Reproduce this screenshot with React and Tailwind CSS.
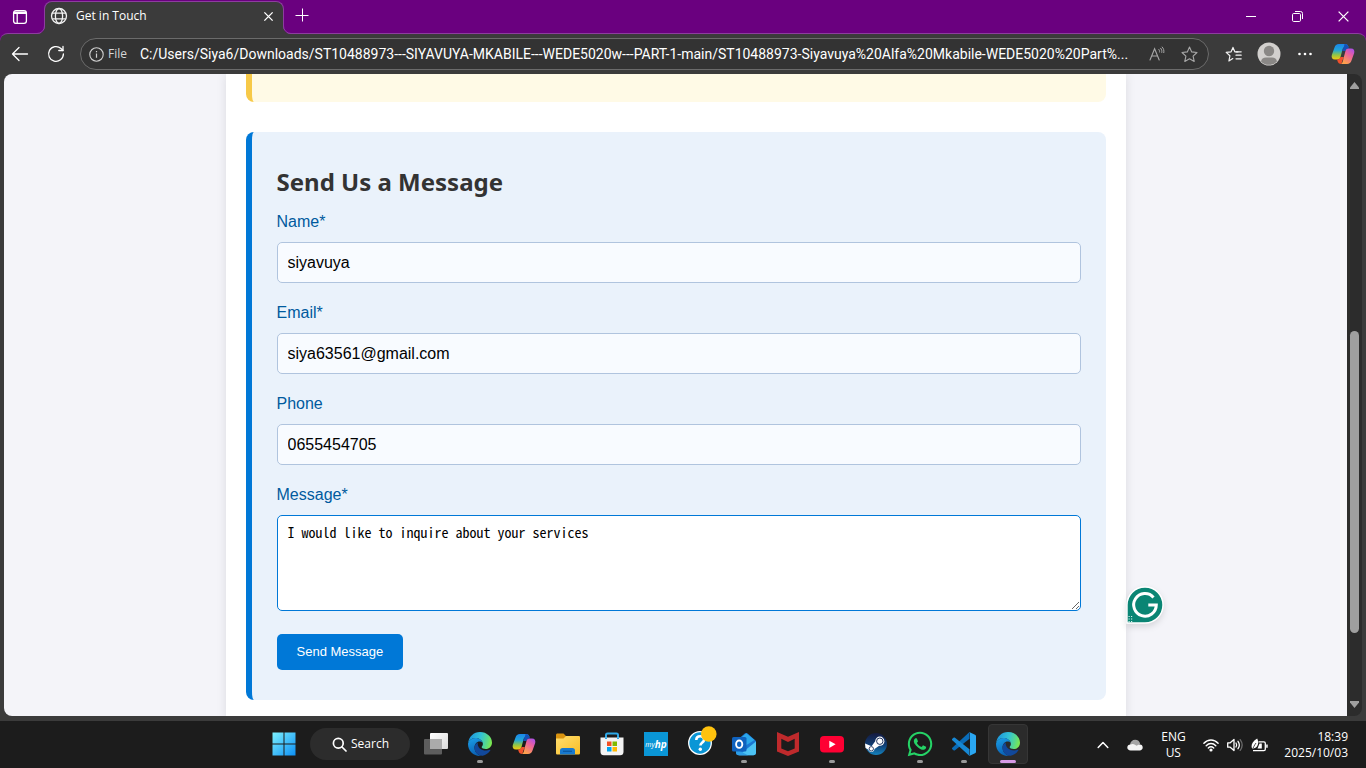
import { useState } from 'react';
import { FaWhatsapp } from 'react-icons/fa';

const UI = "font-['Open_Sans','Noto_Sans',sans-serif]";

/* ---------- browser chrome icons ---------- */

function WorkspaceIcon() {
  return (
    <svg width="16" height="16" viewBox="0 0 16 16" fill="none" stroke="#fff" strokeWidth="1.3">
      <rect x="1.600" y="1.600" width="12.800" height="12.800" rx="2.400" />
      <path d="M2 3.200h12M2 4.200h12" strokeWidth="1.600" />
      <path d="M5.200 4.500v9.600" />
    </svg>
  );
}

function GlobeIcon() {
  return (
    <svg width="18" height="18" viewBox="0 0 18 18" fill="none" stroke="#f2f2f2" strokeWidth="1.300">
      <circle cx="9" cy="9" r="7.500" />
      <ellipse cx="9" cy="9" rx="3.600" ry="7.500" />
      <path d="M2.200 6.200h13.600M2.200 11.800h13.600" />
    </svg>
  );
}

function CrossIcon({ size, stroke }) {
  return (
    <svg width={size} height={size} viewBox="0 0 12 12" stroke="#fff" strokeWidth={stroke} fill="none">
      <path d="M1.500 1.500l9 9M10.500 1.500l-9 9" />
    </svg>
  );
}

function PlusIcon() {
  return (
    <svg width="14" height="14" viewBox="0 0 14 14" stroke="#fff" strokeWidth="1" fill="none">
      <path d="M7.500 .5v13M.5 7.500h13" />
    </svg>
  );
}

function BackIcon() {
  return (
    <svg width="18" height="16" viewBox="0 0 18 16" stroke="#fff" strokeWidth="1.300" fill="none" strokeLinecap="round" strokeLinejoin="round">
      <path d="M8 1.500L1.500 8L8 14.500M1.500 8h15" />
    </svg>
  );
}

function ReloadIcon() {
  return (
    <svg width="18" height="18" viewBox="0 0 18 18" stroke="#fff" strokeWidth="1.300" fill="none" strokeLinecap="round" strokeLinejoin="round">
      <path d="M16.400 9a7.400 7.400 0 1 1-2.400-5.500L16 5.500" />
      <path d="M16 1.400v4.100h-4.200" />
    </svg>
  );
}

function InfoIcon() {
  return (
    <svg width="15" height="15" viewBox="0 0 15 15" stroke="#d0d0d0" fill="none">
      <circle cx="7.500" cy="7.500" r="6.700" strokeWidth="1.100" />
      <path d="M7.500 6.600v4.200M7.500 4v1.300" strokeWidth="1.200" />
    </svg>
  );
}

function ReadAloudIcon() {
  return (
    <svg width="16" height="16" viewBox="0 0 16 16" stroke="#a8a8a8" fill="none" strokeWidth="1.100" strokeLinecap="round">
      <path d="M1 14L5.600 2.800L10.200 14M2.700 10h5.800" />
      <path d="M9.800 3.400c.7.800.9 1.600.8 2.600M11.600 2.200c1.200 1.300 1.500 2.700 1.200 4.200M13.200 1c1.500 1.600 2 3.500 1.600 5.600" strokeWidth="1" />
    </svg>
  );
}

function StarIcon() {
  return (
    <svg width="17" height="17" viewBox="0 0 17 17" stroke="#a8a8a8" fill="none" strokeWidth="1.100" strokeLinejoin="round">
      <path d="M8.500 1l2.200 4.900 5.300.6-3.900 3.600 1.100 5.300-4.700-2.700-4.700 2.700 1.100-5.300L1 6.500l5.300-.6z" />
    </svg>
  );
}

function FavoritesIcon() {
  return (
    <svg width="18" height="17" viewBox="0 0 18 17" stroke="#f2f2f2" fill="none" strokeWidth="1.200" strokeLinejoin="round" strokeLinecap="round">
      <path d="M13 5.800H9.800L8 1.400 6.100 5.800 1.200 6.400l3.700 3.400-1 5.200L7.800 12.600" />
      <path d="M11.200 5.800h5M11 9.200h5.200M11 12.800h5.200" />
    </svg>
  );
}

function AvatarIcon() {
  return (
    <svg width="24" height="24" viewBox="0 0 24 24">
      <circle cx="12" cy="12" r="11.500" fill="#d2d0ce" />
      <circle cx="12" cy="9" r="5.200" fill="#8a8886" />
      <path d="M4 19.400c.4-2.900 2.300-4 5-4h6c2.700 0 4.600 1.100 5 4a11 11 0 0 1-16 0z" fill="#8a8886" />
    </svg>
  );
}

function CopilotIcon({ id }) {
  return (
    <svg width="24" height="24" viewBox="0 0 24 24">
      <defs>
        <linearGradient id={id + 'a'} x1="0" y1="0" x2="0" y2="1">
          <stop offset="0" stopColor="#1a86ea" />
          <stop offset=".4" stopColor="#22a6d8" />
          <stop offset=".7" stopColor="#8fc548" />
          <stop offset="1" stopColor="#f7c80e" />
        </linearGradient>
        <linearGradient id={id + 'b'} x1="1" y1="0" x2=".4" y2="1">
          <stop offset="0" stopColor="#a04df5" />
          <stop offset=".45" stopColor="#ea609f" />
          <stop offset="1" stopColor="#ffa04c" />
        </linearGradient>
      </defs>
      <path d="M8 2h6c2 0 3 1 3.500 3H14c-1.500 0-2 1-2.400 2.200L9.500 15c-.5 1.700-1.300 2.500-3 2.500H4c-2.800 0-3.800-2-3.200-4.500L3.500 5.500C4.200 3.200 5.500 2 8 2z" fill={'url(#' + id + 'a)'} />
      <path d="M13.500 2c2.300 0 3.500 1 4 3l.5 1.500h-.5c-1.700 0-2.500.8-3 2.500h-3.300l.6-1.800c.8-1.800 1.400-3.200 1.700-5.200z" fill="#1450b8" />
      <path d="M10.500 22c-2.300 0-3.500-1-4-3l-.4-1.500h.4c1.700 0 2.500-.8 3-2.500h3.300l-.6 1.800c-.8 1.800-1.400 3.200-1.700 5.200z" fill="#f2502c" />
      <path d="M16 22h-6c1.500-.4 2-3 2.400-5.200L14.500 9c.5-1.700 1.300-2.500 3-2.500H20c2.800 0 3.800 2 3.200 4.500L20.500 18.500c-.7 2.300-2 3.500-4.500 3.500z" fill={'url(#' + id + 'b)'} />
    </svg>
  );
}

/* ---------- taskbar icons ---------- */

function WindowsIcon() {
  return (
    <svg width="24" height="24" viewBox="0 0 24 24">
      <defs>
        <linearGradient id="win" x1="0" y1="0" x2="24" y2="24" gradientUnits="userSpaceOnUse">
          <stop offset="0" stopColor="#7ff3ff" />
          <stop offset="1" stopColor="#0a8df5" />
        </linearGradient>
      </defs>
      <path d="M.5.5h11v11H.5zM12.500.5h11v11h-11zM.5 12.500h11v11H.5zM12.500 12.500h11v11h-11z" fill="url(#win)" />
    </svg>
  );
}

function TaskViewIcon() {
  return (
    <svg width="24" height="24" viewBox="0 0 24 24">
      <defs>
        <linearGradient id="tvA" x1="0" y1="0" x2="1" y2="1">
          <stop offset="0" stopColor="#fff" />
          <stop offset="1" stopColor="#d9d9d9" />
        </linearGradient>
      </defs>
      <rect x="6" y="1" width="18" height="16" rx="1" fill="url(#tvA)" />
      <rect x="0" y="7" width="18" height="15.500" rx="1" fill="#5d5d5d" />
      <rect x="6" y="7" width="12" height="10" fill="#ababab" />
    </svg>
  );
}

function EdgeIcon({ id }) {
  return (
    <svg width="24" height="24" viewBox="0 0 24 24">
      <defs>
        <linearGradient id={id + 'g'} x1="0" y1=".3" x2="1" y2=".5">
          <stop offset="0" stopColor="#1b93dd" />
          <stop offset=".5" stopColor="#32c2d5" />
          <stop offset=".8" stopColor="#57d98b" />
          <stop offset="1" stopColor="#7ce84f" />
        </linearGradient>
        <linearGradient id={id + 'b'} x1="0" y1="0" x2=".3" y2="1">
          <stop offset="0" stopColor="#1ba0e8" />
          <stop offset="1" stopColor="#0a62b4" />
        </linearGradient>
      </defs>
      <path d="M.1 11.200C.700 4.800 5.700 0 12 0c7 0 12 5 12 10.700 0 3.700-2.800 6.300-6.300 6.300-2.300 0-4.100-.8-4.100-2 0-.6 1.300-1.200 1.300-3.100C14.900 9.200 11.800 6 7.600 6 4 6 1.200 8 .1 11.200z" fill={'url(#' + id + 'g)'} />
      <path d="M.1 11.200C1.200 8 4 6 7.600 6c3.600 0 6.300 2.300 7.100 4.700-.8-.9-1.800-1.300-3-1.300-3 0-5.200 2.700-5.200 6 0 4 2.800 7.300 6.700 8.500-.4.100-.8.100-1.200.100C5.200 24 0 18.600 0 12c0-.3 0-.5.1-.8z" fill={'url(#' + id + 'b)'} />
      <path d="M9.800 10.400c-2 1-3.300 2.800-3.300 5.300 0 4.300 3.400 8.300 8.200 8 3.200-.7 6-2.600 7.700-5.400.3-.5-.1-.8-.6-.6-1.200.6-2.500.8-3.700.8-5 0-9.100-3.200-8.300-8.100z" fill="#11489b" />
    </svg>
  );
}

function FolderIcon() {
  return (
    <svg width="24" height="24" viewBox="0 0 24 24">
      <defs>
        <linearGradient id="fld" x1="0" y1="0" x2="1" y2="1">
          <stop offset="0" stopColor="#ffdf70" />
          <stop offset="1" stopColor="#f9bd25" />
        </linearGradient>
      </defs>
      <path d="M0 3c0-.9.600-1.500 1.500-1.500h6L10 4h12.500c.9 0 1.500.6 1.500 1.500V9H0z" fill="#d9930f" />
      <path d="M0 6.500h7.500L10 4h12.500c.9 0 1.500.6 1.500 1.500V21c0 1-.6 1.500-1.500 1.500h-21C.6 22.500 0 22 0 21z" fill="url(#fld)" />
      <path d="M4 22.500v-4c0-1.600 1-2.500 2.500-2.500h10c1.500 0 2.500.9 2.500 2.500v4z" fill="#1779cf" />
      <path d="M7 19.300h9" stroke="#0b59a3" strokeWidth="1.300" />
    </svg>
  );
}

function StoreIcon() {
  return (
    <svg width="24" height="24" viewBox="0 0 24 24">
      <path d="M6 7V3c0-1 .6-1.500 1.500-1.500h9c.9 0 1.500.5 1.500 1.500v4" fill="none" stroke="#2fa9e8" strokeWidth="2" />
      <path d="M.5 5.500h23V20c0 2-1.200 3.300-3.300 3.300H3.800C1.700 23.300.5 22 .5 20z" fill="#f3f3f3" />
      <path d="M6 7V5.500M18 7V5.500" stroke="#2fa9e8" strokeWidth="2" />
      <path d="M7 9.500h4.500V14H7z" fill="#f25022" />
      <path d="M12.500 9.500H17V14h-4.500z" fill="#7fba00" />
      <path d="M7 15h4.500v4.500H7z" fill="#00a4ef" />
      <path d="M12.500 15H17v4.500h-4.500z" fill="#ffb900" />
    </svg>
  );
}

function MyHpIcon() {
  return (
    <span className="flex size-6 items-center justify-center bg-[#0a96d6] font-['Open_Sans',sans-serif] leading-none text-white italic">
      <span className="text-[7px] font-medium">my</span>
      <span className="text-[10px] font-bold">hp</span>
    </span>
  );
}

function HelpIcon() {
  return (
    <svg width="30" height="30" viewBox="0 0 30 30">
      <circle cx="13" cy="17" r="11.300" fill="#0a96d6" stroke="#fff" strokeWidth="1.300" />
      <path d="M9.300 14c0-2.400 1.600-3.800 3.900-3.800 2.400 0 3.900 1.300 3.900 3.300 0 2.900-3.500 3-3.700 6" fill="none" stroke="#fff" strokeWidth="2.600" />
      <circle cx="13.300" cy="23.200" r="1.700" fill="#fff" />
      <circle cx="21.800" cy="8" r="7.800" fill="#ffc20e" />
    </svg>
  );
}

function OutlookIcon() {
  return (
    <svg width="24" height="24" viewBox="0 0 24 24">
      <path d="M4 9L12.800 1.600c.9-.7 1.900-.7 2.800 0L24 9v11.500c0 1.700-1 2.700-2.700 2.700H6.700C5 23.200 4 22.200 4 20.500z" fill="#1a77d3" />
      <path d="M6 8.500l8.200-7.300L22.500 8 13 14z" fill="#2ba7ea" />
      <path d="M24 9.500v11c0 1.700-1 2.700-2.700 2.700H7L24 9.500z" fill="#4cc3f4" />
      <path d="M4 17l12 6.200H6.700C5 23.200 4 22.200 4 20.500z" fill="#2e9fe6" />
      <rect x="0" y="5" width="14.500" height="14.500" rx="1.600" fill="#0f62be" />
      <ellipse cx="7.200" cy="12.200" rx="3.100" ry="3.700" fill="none" stroke="#fff" strokeWidth="1.900" />
    </svg>
  );
}

function ShieldIcon() {
  return (
    <svg width="24" height="24" viewBox="0 0 24 24">
      <path d="M1 0l11 4.800L23 0v19.500L12 24 1 19.500z" fill="#bf2a2c" />
      <path d="M5.300 6.800L12 10l6.700-3.200v9.700L12 19.300l-6.700-2.800z" fill="#1c1c1c" />
    </svg>
  );
}

function YoutubeIcon() {
  return (
    <svg width="24" height="18" viewBox="0 0 24 18">
      <rect x="0" y="1" width="24" height="16.500" rx="4" fill="#ff0033" />
      <path d="M9.300 5.700v7.200l6.300-3.600z" fill="#fff" />
    </svg>
  );
}

function SteamIcon() {
  return (
    <svg width="24" height="24" viewBox="0 0 24 24">
      <defs>
        <linearGradient id="stm" x1="0" y1="0" x2="0" y2="1">
          <stop offset="0" stopColor="#151a3f" />
          <stop offset=".55" stopColor="#0f3d74" />
          <stop offset="1" stopColor="#1583bd" />
        </linearGradient>
      </defs>
      <circle cx="12" cy="12" r="11" fill="url(#stm)" />
      <path d="M1 11.500l6.600 2.800 3.600-5 4.300 4.300-5 3.500c-.2 1.900-1.500 3-3.200 3-1.600 0-2.700-.9-3.100-2.500L1.500 16z" fill="#fff" />
      <circle cx="15.800" cy="9.200" r="4.600" fill="#fff" />
      <circle cx="15.800" cy="9.200" r="3.200" fill="none" stroke="#20325e" strokeWidth="1" />
      <circle cx="7.300" cy="16.800" r="2.200" fill="none" stroke="#20325e" strokeWidth=".9" />
    </svg>
  );
}

function VsCodeIcon() {
  return (
    <svg width="24" height="24" viewBox="0 0 24 24">
      <path d="M17.500 0v6.700L3 18.300c-.5.4-1 .4-1.500 0L.3 17.200c-.5-.5-.5-1 0-1.500z" fill="#0a6cb8" />
      <path d="M17.500 24v-6.700L3 5.700c-.5-.4-1-.4-1.500 0L.3 6.800c-.5.5-.5 1 0 1.500z" fill="#1788d4" />
      <path d="M17.200.1L23 2.800c.6.300 1 .8 1 1.500v15.400c0 .7-.4 1.200-1 1.500l-5.800 2.700c.5-.4.800-.9.800-1.600V1.700c0-.7-.3-1.200-.8-1.600z" fill="#2aa7f2" />
    </svg>
  );
}

function CloudIcon() {
  return (
    <svg width="16" height="12" viewBox="0 0 16 12">
      <path d="M3 6C3.200 2.700 5.300.7 8.200.7c2.500 0 4.500 1.600 5 4.200L9 8z" fill="#a6a6a6" />
      <path d="M3.600 11.400C1.600 11.400.3 10.200.3 8.500c0-1.800 1.300-3 3.200-3 1.500-.9 3.200-.8 4.500.2l1.500 1c3.500-2.300 6.200-1.300 6.200 1.800 0 1.800-1.300 2.900-3 2.900z" fill="#f5f5f5" />
    </svg>
  );
}

function WifiIcon() {
  return (
    <svg width="16" height="14" viewBox="0 0 16 14" fill="none" stroke="#fff" strokeWidth="1.400" strokeLinecap="round">
      <path d="M.9 5.300c4-4.400 10.200-4.400 14.200 0M3.200 7.700c2.800-3 6.800-3 9.600 0M5.300 10c1.600-1.600 3.800-1.600 5.400 0" />
      <circle cx="8" cy="12" r=".9" fill="#fff" />
    </svg>
  );
}

function SpeakerIcon() {
  return (
    <svg width="16" height="14" viewBox="0 0 16 14" fill="none" stroke="#fff" strokeWidth="1.300" strokeLinecap="round" strokeLinejoin="round">
      <path d="M.7 4.800h2.500L7 1.400v11.200L3.200 9.200H.7z" />
      <path d="M9 5c.8 1.200.8 2.800 0 4M11 3.300c1.600 2.200 1.600 5.200 0 7.400" />
      <path d="M13.200 1.600c2.400 3.300 2.400 7.500 0 10.800" stroke="#6b6b6b" />
    </svg>
  );
}

function BatteryIcon() {
  return (
    <svg width="17" height="14" viewBox="0 0 17 14">
      <path d="M7.500 3.800h5.400c.9 0 1.400.5 1.400 1.400v6c0 .9-.5 1.400-1.400 1.400H2" fill="none" stroke="#fff" strokeWidth="1.300" />
      <path d="M8.500 5.600h2.300v5H6.500zM15.200 6.600h1.500v3.200h-1.500z" fill="#fff" />
      <path d="M1.200 10.800C-.4 8 1 3 6.200.4c1.300 2.600 1.400 6-.3 8-1.200 1.500-2.700 2-4.700 2.400z" fill="#fff" />
      <path d="M1 12.800C2.200 9.500 3.500 7 5 5" stroke="#1c1c1c" strokeWidth=".8" fill="none" />
    </svg>
  );
}

function GrammarlyIcon() {
  return (
    <svg width="38" height="38" viewBox="0 0 38 38" className="drop-shadow-md">
      <path d="M1 37V19a18 18 0 1 1 18 18z" fill="#0a8574" stroke="#fff" strokeWidth="1.400" />
      <path d="M27.500 11.400A11.300 11.300 0 1 0 30.300 19h-8" fill="none" stroke="#fff" strokeWidth="3" />
      <path d="M2.500 30.500h1.200M5 30.500h1.200M2.500 33h1.200M5 33h1.200M2.500 35.500h1.200M5 35.500h1.200" stroke="#d8f0ec" strokeWidth="1.100" />
    </svg>
  );
}

/* ---------- browser window ---------- */

function TabFlare({ className }) {
  return (
    <svg aria-hidden="true" width="8" height="8" viewBox="0 0 8 8" className={className}>
      <path d="M8 0v8H0a8 8 0 0 0 8-8z" fill="#3b3b3b" />
      <path d="M0 7.500A7.500 7.500 0 0 0 7.500 0" fill="none" stroke="#8d3d9f" />
    </svg>
  );
}

function TitleBar() {
  return (
    <header className="flex h-[33px] shrink-0 items-stretch bg-[#6a007f]">
      <button aria-label="Workspaces" className="flex w-11 items-center justify-center pr-1">
        <WorkspaceIcon />
      </button>
      <div className="relative z-10 mt-px -mb-px flex w-60 items-center gap-2 rounded-t-lg border border-b-0 border-[#8d3d9f] bg-[#3b3b3b] pr-[7px] pb-1 pl-[5px]">
        <TabFlare className="absolute bottom-0 -left-2" />
        <TabFlare className="absolute -right-2 bottom-0 -scale-x-100" />
        <GlobeIcon />
        <span className="flex-1 text-xs text-white">Get in Touch</span>
        <button aria-label="Close tab" className="flex size-4 items-center justify-center">
          <CrossIcon size={11} stroke={1.5} />
        </button>
      </div>
      <button aria-label="New tab" className="flex w-9 items-center justify-center pb-1">
        <PlusIcon />
      </button>
      <div className="ml-auto flex">
        <button aria-label="Minimize" className="flex w-[46px] items-center justify-center">
          <span className="h-px w-2.5 bg-white" />
        </button>
        <button aria-label="Restore" className="flex w-[46px] items-center justify-center">
          <svg width="11" height="11" viewBox="0 0 11 11" fill="none" stroke="#fff">
            <rect x=".5" y="2.500" width="8" height="8" rx="1.200" />
            <path d="M3 .5h5.500a2 2 0 0 1 2 2V8" />
          </svg>
        </button>
        <button aria-label="Close" className="flex w-[46px] items-center justify-center">
          <CrossIcon size={13} stroke={1.2} />
        </button>
      </div>
    </header>
  );
}

function Toolbar() {
  const [url, setUrl] = useState(
    'C:/Users/Siya6/Downloads/ST10488973---SIYAVUYA-MKABILE---WEDE5020w---PART-1-main/ST10488973-Siyavuya%20Alfa%20Mkabile-WEDE5020%20Part%...'
  );
  return (
    <div className="shrink-0 bg-[#6a007f]">
      <div className="flex h-[41px] items-center rounded-t-lg border-t border-[#8d3d9f] bg-[#3b3b3b] px-[11px]">
        <button aria-label="Back" className="flex w-[18px] justify-center"><BackIcon /></button>
        <button aria-label="Refresh" className="ml-[18px] flex w-[18px] justify-center"><ReloadIcon /></button>
        <div className="ml-[15px] flex h-8 min-w-0 flex-1 items-center rounded-full border border-[#6b6b6b] bg-[#333] pr-2.5 pl-2">
          <InfoIcon />
          <span className="ml-1 w-8 text-xs text-[#d6d6d6]">File</span>
          <input
            aria-label="Address"
            value={url}
            onChange={(e) => setUrl(e.target.value)}
            className="min-w-0 flex-1 bg-transparent font-['Roboto',sans-serif] text-sm text-ellipsis text-white outline-none"
          />
          <button aria-label="Read aloud" className="ml-4"><ReadAloudIcon /></button>
          <button aria-label="Add to favorites" className="ml-4"><StarIcon /></button>
        </div>
        <button aria-label="Favorites" className="ml-4"><FavoritesIcon /></button>
        <button aria-label="Profile" className="ml-3.5"><AvatarIcon /></button>
        <button aria-label="Settings and more" className="ml-4">
          <svg width="16" height="4" viewBox="0 0 16 4" fill="#fff">
            <circle cx="2.500" cy="2" r="1.300" /><circle cx="8" cy="2" r="1.300" /><circle cx="13.500" cy="2" r="1.300" />
          </svg>
        </button>
        <button aria-label="Copilot" className="ml-[18px]"><CopilotIcon id="cpA" /></button>
      </div>
    </div>
  );
}

/* ---------- page ---------- */

function Field({ id, label, type, initial }) {
  const [value, setValue] = useState(initial);
  return (
    <div className="mb-[18px] flex flex-col gap-2">
      <label htmlFor={id} className="leading-6 text-[#005a9e]">{label}</label>
      <input
        id={id}
        type={type}
        value={value}
        onChange={(e) => setValue(e.target.value)}
        className="h-[41px] w-full rounded-[5px] border border-[#b0c4de] bg-[#f8fbff] px-2.5 text-black outline-none"
      />
    </div>
  );
}

function ContactForm() {
  const [message, setMessage] = useState('I would like to inquire about your services');
  return (
    <form
      onSubmit={(e) => e.preventDefault()}
      className="mt-[30px] rounded-lg border-l-[6px] border-[#0078d7] bg-[#eaf2fb] px-[25px] pt-[35px] pb-[30px] font-['Liberation_Sans',Arial,sans-serif] text-base"
    >
      <h2 className="mb-[13px] font-['Noto_Sans','Open_Sans',sans-serif] text-2xl leading-[30px] font-bold text-[#333]">
        Send Us a Message
      </h2>
      <Field id="name" label="Name*" type="text" initial="siyavuya" />
      <Field id="email" label="Email*" type="email" initial="siya63561@gmail.com" />
      <Field id="phone" label="Phone" type="tel" initial="0655454705" />
      <div className="flex flex-col gap-2">
        <label htmlFor="message" className="leading-6 text-[#005a9e]">Message*</label>
        <textarea
          id="message"
          value={message}
          onChange={(e) => setMessage(e.target.value)}
          className="h-24 w-full resize rounded-[5px] border border-[#0078d7] bg-white px-2.5 py-2 font-['Noto_Sans_Mono_CJK_SC','Liberation_Mono',monospace] text-sm leading-4 text-black outline-none"
        />
      </div>
      <button type="submit" className="mt-[23px] flex h-9 items-center rounded-[5px] bg-[#0078d7] px-5 text-[13px] text-white">
        Send Message
      </button>
    </form>
  );
}

function Scrollbar() {
  return (
    <div aria-hidden="true" className="flex w-[15px] shrink-0 flex-col items-center bg-[#2c2c2c] py-2">
      <svg width="9" height="7" viewBox="0 0 9 7"><path d="M4.500 0L9 5.500V7H0V5.500z" fill="#9f9f9f" /></svg>
      <div className="grow-[242]" />
      <div className="w-[9px] grow-[302] rounded-full bg-[#9f9f9f]" />
      <div className="grow-[68]" />
      <svg width="9" height="7" viewBox="0 0 9 7"><path d="M4.500 7L9 1.500V0H0v1.500z" fill="#9f9f9f" /></svg>
    </div>
  );
}

function Page() {
  return (
    <div className="flex min-h-0 flex-1 bg-[#3b3b3b] px-1 pb-[5px]">
      <div className="relative flex min-w-0 flex-1 overflow-hidden rounded-lg">
        <main className="min-w-0 flex-1 overflow-hidden bg-[#f4f4f9]">
          <div className="relative mx-auto min-h-full max-w-[900px] bg-white px-5 pb-5 shadow-[0_0_10px_rgba(0,0,0,0.1)]">
            <div className="h-7 rounded-b-lg border-l-[6px] border-[#f7c948] bg-[#fffae6]" />
            <ContactForm />
            <button aria-label="Writing assistant" className="absolute top-[512px] -right-[38px]">
              <GrammarlyIcon />
            </button>
          </div>
        </main>
        <Scrollbar />
      </div>
    </div>
  );
}

/* ---------- taskbar ---------- */

function TaskItem({ label, running, active, children }) {
  return (
    <button
      aria-label={label}
      className={
        'relative flex h-10 w-10 items-center justify-center rounded border ' +
        (active ? 'border-[#363636] bg-[#2b2b2b]' : 'border-transparent')
      }
    >
      {children}
      {running && (
        <span
          className={
            'absolute bottom-0 rounded-full ' +
            (active ? 'h-[3px] w-4 bg-[#d79ae6]' : 'h-[3px] w-1.5 bg-[#9a9a9a]')
          }
        />
      )}
    </button>
  );
}

function Taskbar() {
  return (
    <footer className="relative flex h-[47px] shrink-0 items-center justify-center bg-[#1c1c1c] pr-[74px] pb-px text-xs text-white">
      <div className="flex items-center gap-1">
        <TaskItem label="Start"><WindowsIcon /></TaskItem>
        <button className="mr-0.5 ml-0.5 flex h-8 w-[100px] items-center gap-1 rounded-full bg-[#2c2c2c] pl-[22px]">
          <svg width="15" height="15" viewBox="0 0 15 15" fill="none" stroke="#fff" strokeWidth="1.700" strokeLinecap="round">
            <circle cx="6.300" cy="6.300" r="4.900" /><path d="M10 10l4 4" />
          </svg>
          Search
        </button>
        <TaskItem label="Task view"><TaskViewIcon /></TaskItem>
        <TaskItem label="Microsoft Edge" running><EdgeIcon id="eA" /></TaskItem>
        <TaskItem label="Copilot"><CopilotIcon id="cpB" /></TaskItem>
        <TaskItem label="File Explorer"><FolderIcon /></TaskItem>
        <TaskItem label="Microsoft Store"><StoreIcon /></TaskItem>
        <TaskItem label="myHP"><MyHpIcon /></TaskItem>
        <TaskItem label="HP Support"><span className="-mt-1.5 ml-1"><HelpIcon /></span></TaskItem>
        <TaskItem label="Outlook" running><OutlookIcon /></TaskItem>
        <TaskItem label="McAfee"><ShieldIcon /></TaskItem>
        <TaskItem label="YouTube" running><YoutubeIcon /></TaskItem>
        <TaskItem label="Steam"><SteamIcon /></TaskItem>
        <TaskItem label="WhatsApp" running><FaWhatsapp size={28} color="#25d366" /></TaskItem>
        <TaskItem label="Visual Studio Code" running><VsCodeIcon /></TaskItem>
        <TaskItem label="Get in Touch - Edge" running active><EdgeIcon id="eB" /></TaskItem>
      </div>
      <div className="absolute inset-y-0 right-[18px] flex items-center">
        <svg width="12" height="8" viewBox="0 0 12 8" fill="none" stroke="#fff" strokeWidth="1.500" strokeLinecap="round" strokeLinejoin="round">
          <path d="M1.200 6.500L6 1.500l4.800 5" />
        </svg>
        <span className="ml-[18px]"><CloudIcon /></span>
        <span className="ml-[18px] w-6 text-center text-xs leading-4">ENG<br />US</span>
        <span className="ml-[18px] flex items-center gap-2"><WifiIcon /><SpeakerIcon /><BatteryIcon /></span>
        <time className="ml-4 text-right text-xs leading-4">18:39<br />2025/10/03</time>
      </div>
    </footer>
  );
}

export default function App() {
  return (
    <div className={'flex h-screen flex-col overflow-hidden bg-[#3b3b3b] ' + UI}>
      <TitleBar />
      <Toolbar />
      <Page />
      <Taskbar />
    </div>
  );
}
